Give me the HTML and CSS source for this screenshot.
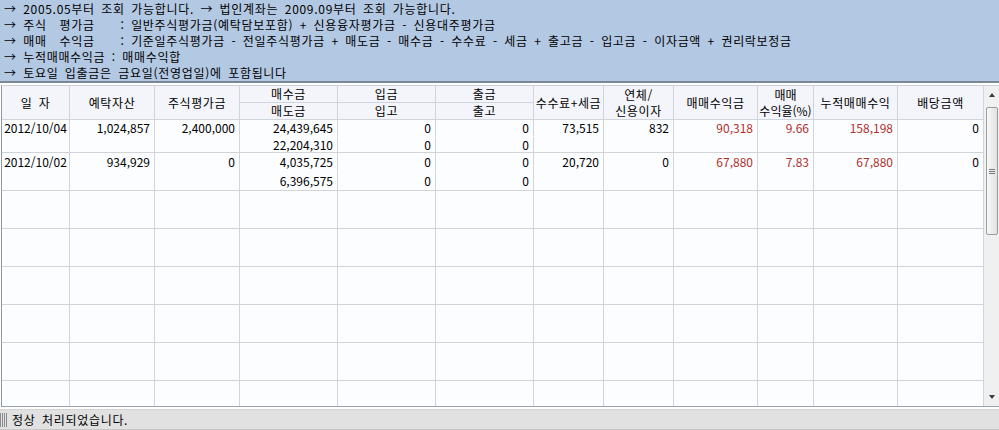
FILE: index.html
```html
<!DOCTYPE html>
<html lang="ko">
<head>
    <meta charset="UTF-8">
    <meta name="viewport" content="width=device-width, initial-scale=1.0">
    <title>매매손익 조회</title>
    <link rel="stylesheet" href="styles.css">
</head>
<body>
    <div class="notice">
        <div class="notice-line">→ 2005.05부터 조회 가능합니다. → 법인계좌는 2009.09부터 조회 가능합니다.</div>
        <div class="notice-line">→ 주식  평가금    : 일반주식평가금(예탁담보포함) + 신용융자평가금 - 신용대주평가금</div>
        <div class="notice-line">→ 매매  수익금    : 기준일주식평가금 - 전일주식평가금 + 매도금 - 매수금 - 수수료 - 세금 + 출고금 - 입고금 - 이자금액 + 권리락보정금</div>
        <div class="notice-line">→ 누적매매수익금 : 매매수익합</div>
        <div class="notice-line">→ 토요일 입출금은 금요일(전영업일)에 포함됩니다</div>
    </div>

    <div class="board">
        <div class="sheet">
            <div class="grid">
                <!-- header -->
                <div class="cell head span2">일 자</div>
                <div class="cell head span2">예탁자산</div>
                <div class="cell head span2">주식평가금</div>
                <div class="cell head">매수금</div>
                <div class="cell head">입금</div>
                <div class="cell head">출금</div>
                <div class="cell head span2">수수료+세금</div>
                <div class="cell head span2">연체/<br>신용이자</div>
                <div class="cell head span2">매매수익금</div>
                <div class="cell head tight span2">매매<br>수익율(%)</div>
                <div class="cell head span2">누적매매수익</div>
                <div class="cell head span2">배당금액</div>
                <div class="cell head">매도금</div>
                <div class="cell head">입고</div>
                <div class="cell head">출고</div>

                <!-- 2012/10/04 -->
                <div class="record rec-short">
                    <div class="cell date span2">2012/10/04</div>
                    <div class="cell num span2">1,024,857</div>
                    <div class="cell num span2">2,400,000</div>
                    <div class="cell num upper">24,439,645</div>
                    <div class="cell num upper">0</div>
                    <div class="cell num upper">0</div>
                    <div class="cell num span2">73,515</div>
                    <div class="cell num span2">832</div>
                    <div class="cell num profit span2">90,318</div>
                    <div class="cell num profit span2">9.66</div>
                    <div class="cell num profit span2">158,198</div>
                    <div class="cell num span2">0</div>
                    <div class="cell num">22,204,310</div>
                    <div class="cell num">0</div>
                    <div class="cell num">0</div>
                </div>

                <!-- 2012/10/02 -->
                <div class="record rec-tall">
                    <div class="cell date span2">2012/10/02</div>
                    <div class="cell num span2">934,929</div>
                    <div class="cell num span2">0</div>
                    <div class="cell num upper">4,035,725</div>
                    <div class="cell num upper">0</div>
                    <div class="cell num upper">0</div>
                    <div class="cell num span2">20,720</div>
                    <div class="cell num span2">0</div>
                    <div class="cell num profit span2">67,880</div>
                    <div class="cell num profit span2">7.83</div>
                    <div class="cell num profit span2">67,880</div>
                    <div class="cell num span2">0</div>
                    <div class="cell num">6,396,575</div>
                    <div class="cell num">0</div>
                    <div class="cell num">0</div>
                </div>

                <!-- empty rows -->
                <div class="cell"></div><div class="cell"></div><div class="cell"></div><div class="cell"></div><div class="cell"></div><div class="cell"></div><div class="cell"></div><div class="cell"></div><div class="cell"></div><div class="cell"></div><div class="cell"></div><div class="cell"></div>
                <div class="cell"></div><div class="cell"></div><div class="cell"></div><div class="cell"></div><div class="cell"></div><div class="cell"></div><div class="cell"></div><div class="cell"></div><div class="cell"></div><div class="cell"></div><div class="cell"></div><div class="cell"></div>
                <div class="cell"></div><div class="cell"></div><div class="cell"></div><div class="cell"></div><div class="cell"></div><div class="cell"></div><div class="cell"></div><div class="cell"></div><div class="cell"></div><div class="cell"></div><div class="cell"></div><div class="cell"></div>
                <div class="cell"></div><div class="cell"></div><div class="cell"></div><div class="cell"></div><div class="cell"></div><div class="cell"></div><div class="cell"></div><div class="cell"></div><div class="cell"></div><div class="cell"></div><div class="cell"></div><div class="cell"></div>
                <div class="cell"></div><div class="cell"></div><div class="cell"></div><div class="cell"></div><div class="cell"></div><div class="cell"></div><div class="cell"></div><div class="cell"></div><div class="cell"></div><div class="cell"></div><div class="cell"></div><div class="cell"></div>
                <div class="cell"></div><div class="cell"></div><div class="cell"></div><div class="cell"></div><div class="cell"></div><div class="cell"></div><div class="cell"></div><div class="cell"></div><div class="cell"></div><div class="cell"></div><div class="cell"></div><div class="cell"></div>
            </div>
        </div>

        <div class="vscroll">
            <div class="vscroll-btn"><span class="arrow-up"></span></div>
            <div class="thumb"><span class="thumb-grip"></span></div>
            <div class="vscroll-track"></div>
            <div class="vscroll-btn"><span class="arrow-down"></span></div>
        </div>
    </div>

    <div class="status">
        <span class="status-grip"></span>
        <span class="status-text">정상 처리되었습니다.</span>
    </div>
</body>
</html>
```

FILE: styles.css
```css
:root {
    --notice-bg: #b3c8e3;
    --head-bg: #f3f5fa;
    --cell-bg: #fcfdff;
    --line-color: #d2d4d9;
    --frame-color: #8f99a4;
    --profit-color: #b0302c;
}

body {
    margin: 0;
    width: 999px;
    height: 430px;
    overflow: hidden;
    background-color: #fff;
    font-family: "Noto Sans CJK KR", "Noto Sans", sans-serif;
    font-size: 12px;
    color: #000;
}

/* info panel */
.notice {
    height: 83px;
    box-sizing: border-box;
    padding: 1px 0 0 4px;
    background-color: var(--notice-bg);
    border-bottom: 2px solid #7d8894;
    letter-spacing: 0.7px;
    word-spacing: 2.4px;
}

.notice-line {
    height: 16px;
    line-height: 16px;
    white-space: pre;
}

/* grid area */
.board {
    display: flex;
    height: 326px;
    box-sizing: border-box;
    padding: 2px 0 2px 1px;
    background-color: #fff;
}

.sheet {
    width: 983px;
    height: 322px;
    box-sizing: border-box;
    border-left: 1px solid var(--frame-color);
    border-top: 1px solid #cdd2da;
    border-bottom: 1px solid #9aa2ab;
    background-color: var(--cell-bg);
    overflow: hidden;
}

.grid {
    display: grid;
    grid-template-columns: 68px 85px 85px 98px 98px 98px 70px 70px 84px 56px 84px 86px;
    grid-template-rows: 17px 17px 17px 16px 19px 19px repeat(6, 38px);
}

.record {
    display: contents;
}

.cell {
    box-sizing: border-box;
    border-right: 1px solid var(--line-color);
    border-bottom: 1px solid var(--line-color);
    padding: 0 4px;
    white-space: nowrap;
    overflow: hidden;
}

.span2 {
    grid-row: span 2;
}

.head {
    display: flex;
    align-items: center;
    justify-content: center;
    padding: 0;
    text-align: center;
    line-height: 16px;
    letter-spacing: 0.6px;
    word-spacing: 2.4px;
    background-color: var(--head-bg);
    border-color: #d0d4dc;
}

.head.tight {
    letter-spacing: 0;
}

.rec-short .cell {
    line-height: 16px;
}

.rec-tall .cell {
    line-height: 18px;
}

.upper {
    border-bottom-color: transparent;
}

.date {
    text-align: center;
    padding: 0;
}

.num {
    text-align: right;
}

.profit {
    color: var(--profit-color);
}

/* scrollbar */
.vscroll {
    width: 15px;
    height: 322px;
    box-sizing: border-box;
    display: flex;
    flex-direction: column;
    align-items: center;
    background-color: #f0f0f0;
    border-top: 1px solid #cdd2da;
    border-bottom: 1px solid #9aa2ab;
}

.vscroll-btn {
    width: 100%;
    height: 18px;
    display: flex;
    align-items: center;
    justify-content: center;
}

.arrow-up {
    width: 0;
    height: 0;
    border-left: 3px solid transparent;
    border-right: 3px solid transparent;
    border-bottom: 4px solid #3a3a3a;
}

.arrow-down {
    width: 0;
    height: 0;
    border-left: 3px solid transparent;
    border-right: 3px solid transparent;
    border-top: 4px solid #3a3a3a;
}

.thumb {
    margin-top: 3px;
    width: 12px;
    height: 128px;
    box-sizing: border-box;
    border: 1px solid #9d9d9d;
    border-radius: 2px;
    background: linear-gradient(to right, #f7f7f7, #e1e1e1);
    display: flex;
    align-items: center;
    justify-content: center;
}

.thumb-grip {
    width: 6px;
    height: 5px;
    background: repeating-linear-gradient(to bottom, #7a7a7a 0 1px, transparent 1px 2px);
}

.vscroll-track {
    flex: 1;
}

/* status bar */
.status {
    height: 21px;
    box-sizing: border-box;
    display: flex;
    align-items: center;
    background-color: #e1e1e1;
    border-top: 1px solid #d4d4d4;
    border-bottom: 1px solid #c6c6c6;
    letter-spacing: 0.7px;
    word-spacing: 2.4px;
}

.status-grip {
    width: 8px;
    height: 14px;
    margin-right: 4px;
    background: repeating-linear-gradient(to right, #8c8c8c 0 1px, transparent 1px 2px);
}

.status-text {
    line-height: 19px;
}
```
